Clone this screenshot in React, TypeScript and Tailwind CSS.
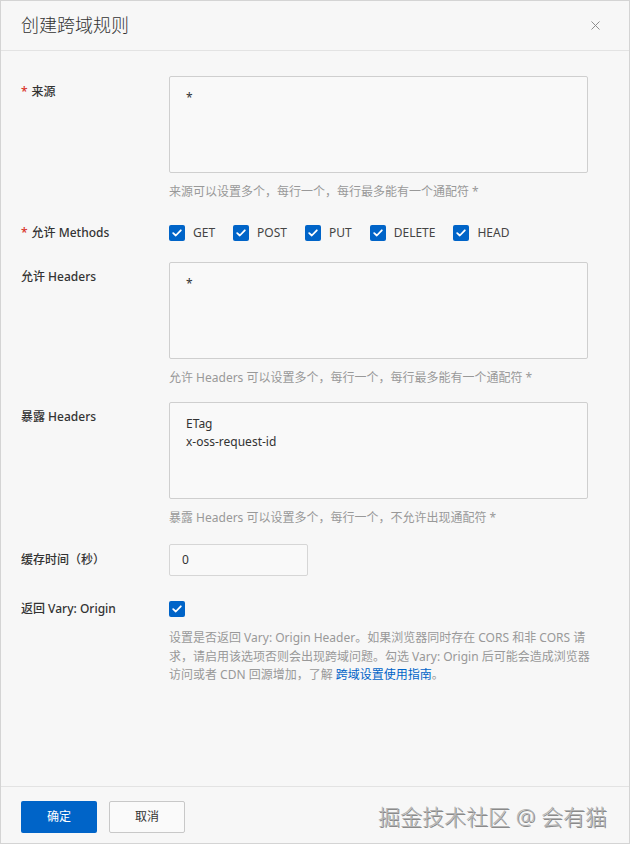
import { X } from 'lucide-react';

const font = { fontFamily: '"Noto Sans", "Noto Sans CJK SC", sans-serif' };

function Check() {
  return (
    <span className="flex h-4 w-4 shrink-0 items-center justify-center rounded-[2px] bg-[#0064c8]">
      <svg width="10" height="8" viewBox="0 0 10 8" fill="none">
        <path d="M1.2 4.1 L3.8 6.5 L8.8 1.3" stroke="#fff" strokeWidth="1.8" strokeLinecap="round" strokeLinejoin="round" />
      </svg>
    </span>
  );
}

function Label({ required, children }: { required?: boolean; children: React.ReactNode }) {
  return (
    <div className="w-[148px] shrink-0 text-[12px] leading-[18px] font-medium text-[#333]">
      {required && <span className="mr-1 text-[#d93026]">*</span>}
      {children}
    </div>
  );
}

function Help({ children }: { children: React.ReactNode }) {
  return <p className="mt-[10px] text-[12px] leading-[18px] text-[#999]">{children}</p>;
}

function Area({ lines }: { lines: string[] }) {
  return (
    <div className="h-[97px] w-[419px] rounded-[2px] border border-[#cfcfcf] bg-[#f9f9f9] px-4 pt-[12px] text-[12px] leading-[18px] text-[#333]">
      {lines.map((l) => (
        <div key={l}>{l}</div>
      ))}
    </div>
  );
}

const methods = ['GET', 'POST', 'PUT', 'DELETE', 'HEAD'];

export default function App() {
  return (
    <div style={font} className="flex h-[844px] w-[630px] flex-col border border-[#d4d4d4] bg-[#f7f7f7]">
      {/* Header */}
      <div className="flex h-[50px] shrink-0 items-center justify-between border-b border-[#e3e3e3] pl-5 pr-[26px]">
        <h1 className="text-[18px] font-light text-[#333]">创建跨域规则</h1>
        <X className="h-[15px] w-[15px] text-[#888]" strokeWidth={1.5} />
      </div>

      {/* Body */}
      <div className="flex-1 px-5 pt-[25px]">
        <div className="flex">
          <div className="pt-[7px]">
            <Label required>来源</Label>
          </div>
          <div>
            <Area lines={['*']} />
            <Help>来源可以设置多个，每行一个，每行最多能有一个通配符 *</Help>
          </div>
        </div>

        <div className="mt-[23px] flex items-center">
          <Label required>允许 Methods</Label>
          <div className="flex items-center gap-[18px]">
            {methods.map((m) => (
              <div key={m} className="flex items-center gap-2">
                <Check />
                <span className="text-[12px] leading-[18px] text-[#444]">{m}</span>
              </div>
            ))}
          </div>
        </div>

        <div className="mt-[20px] flex">
          <div className="pt-[6px]">
            <Label>允许 Headers</Label>
          </div>
          <div>
            <Area lines={['*']} />
            <Help>允许 Headers 可以设置多个，每行一个，每行最多能有一个通配符 *</Help>
          </div>
        </div>

        <div className="mt-[15px] flex">
          <div className="pt-[6px]">
            <Label>暴露 Headers</Label>
          </div>
          <div>
            <Area lines={['ETag', 'x-oss-request-id']} />
            <Help>暴露 Headers 可以设置多个，每行一个，不允许出现通配符 *</Help>
          </div>
        </div>

        <div className="mt-[17px] flex items-center">
          <Label>缓存时间（秒）</Label>
          <div className="flex h-[32px] w-[139px] items-center rounded-[2px] border border-[#d6d6d6] bg-[#f9f9f9] px-3 text-[12px] text-[#333]">
            0
          </div>
        </div>

        <div className="mt-[24px] flex">
          <Label>返回 Vary: Origin</Label>
          <div>
            <div className="pt-[1px]">
              <Check />
            </div>
            <p className="mt-[12px] text-[12px] leading-[18.5px] text-[#999]">
              设置是否返回 Vary: Origin Header。如果浏览器同时存在 CORS 和非 CORS 请
              <br />
              求，请启用该选项否则会出现跨域问题。勾选 Vary: Origin 后可能会造成浏览器
              <br />
              访问或者 CDN 回源增加，了解 <span className="text-[#0064c8]">跨域设置使用指南</span>。
            </p>
          </div>
        </div>
      </div>

      {/* Footer */}
      <div className="flex h-[57px] shrink-0 items-center justify-between border-t border-[#e3e3e3] pl-5 pr-[22px]">
        <div className="flex gap-3 pt-[4px]">
          <button className="h-[32px] w-[76px] rounded-[2px] bg-[#0064c8] text-[12px] text-white">确定</button>
          <button className="h-[32px] w-[76px] rounded-[2px] border border-[#c8c8c8] bg-[#fafafa] text-[12px] text-[#333]">
            取消
          </button>
        </div>
        <span
          className="pt-[2px] text-[22px] font-light leading-none text-[#b4b4b4]"
          style={{ textShadow: '1px 1px 0 #8a8a8a' }}
        >
          掘金技术社区 @ 会有猫
        </span>
      </div>
    </div>
  );
}
